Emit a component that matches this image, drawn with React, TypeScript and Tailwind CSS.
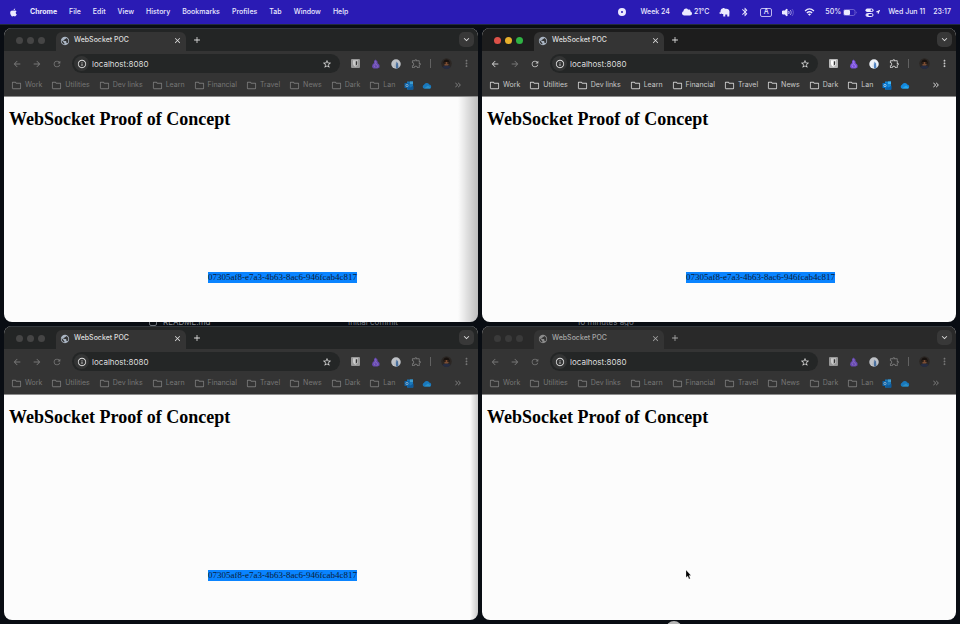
import React from "react";
import { FaApple, FaCloud, FaLocationArrow } from "react-icons/fa";
import {
  MdAdd,
  MdArrowBack,
  MdArrowForward,
  MdBluetooth,
  MdClose,
  MdInfoOutline,
  MdKeyboardArrowDown,
  MdKeyboardDoubleArrowRight,
  MdMoreVert,
  MdOutlineExtension,
  MdOutlineFolder,
  MdPublic,
  MdRefresh,
  MdStarBorder,
} from "react-icons/md";

const MENUS = ["File", "Edit", "View", "History", "Bookmarks", "Profiles", "Tab", "Window", "Help"];
const BOOKMARKS = ["Work", "Utilities", "Dev links", "Learn", "Financial", "Travel", "News", "Dark", "Lan"];
const MESSAGE = "07305af8-e7a3-4b63-8ac6-946fcab4c817";

function Elephant() {
  return (
    <svg viewBox="0 0 22 18" className="h-[9px] w-[11px]" fill="currentColor" aria-hidden="true">
      <path d="M7 1c2-1.500 4-1 5 .5 5-1 9 1 9 6 0 3-.5 6-.5 9.500h-4v-4h-4v4h-4v-5c-1.500.5-2.500 0-3-1-2 1.500-5 1-5-2 2 .8 2.500-.5 2.500-2C3 4 4.500 1.500 7 1z" />
    </svg>
  );
}

function Speaker() {
  return (
    <svg viewBox="0 0 24 18" className="h-[9px] w-3" fill="none" stroke="currentColor" strokeWidth="2" aria-hidden="true">
      <path d="M1 6h4l5-4v14l-5-4H1z" fill="currentColor" />
      <path d="M13 6c1.500 2 1.500 4 0 6" />
      <path d="M16.500 4c2.500 3 2.500 7 0 10" opacity=".6" />
      <path d="M20 2c3.500 4 3.500 10 0 14" opacity=".3" />
    </svg>
  );
}

function Wifi() {
  return (
    <svg viewBox="0 0 24 18" className="h-2 w-[11px]" fill="none" stroke="currentColor" strokeWidth="3" aria-hidden="true">
      <path d="M2 6.500c6-5.500 14-5.500 20 0" />
      <path d="M6 11c4-3.500 8-3.500 12 0" />
      <path d="M12 17.500l-3.500-3.500c2-1.800 5-1.800 7 0z" fill="currentColor" stroke="none" />
    </svg>
  );
}

function Battery() {
  return (
    <svg viewBox="0 0 28 14" className="h-[7px] w-[14px]" fill="none" aria-hidden="true">
      <rect x="1" y="1" width="23" height="12" rx="3.500" stroke="#8377d8" strokeWidth="1.500" />
      <rect x="2" y="2" width="12" height="10" rx="2" fill="#eceaff" />
      <path d="M26 5v4c1.500-.5 1.500-3.500 0-4z" fill="#8377d8" />
    </svg>
  );
}

function ControlCenter() {
  return (
    <svg viewBox="0 0 18 18" className="size-[9px]" fill="none" stroke="currentColor" strokeWidth="2" aria-hidden="true">
      <rect x="1" y="1" width="16" height="7" rx="3.500" fill="currentColor" stroke="none" />
      <circle cx="13" cy="4.500" r="1.800" fill="#2a1bb4" stroke="none" />
      <rect x="2" y="11" width="14" height="6" rx="3" />
      <circle cx="5" cy="14" r="2.500" fill="currentColor" stroke="none" />
    </svg>
  );
}

function Shield() {
  return (
    <svg viewBox="0 0 18 18" className="size-[9px]" aria-hidden="true">
      <rect width="18" height="18" rx="2" fill="#b9b9b9" />
      <path d="M4 2.500h10V9c0 3-2 5-5 6.500C6 14 4 12 4 9z" fill="#fff" />
      <path d="M9.500 4.500h3V9c0 2-1 3.200-3 4.500z" fill="#343434" />
    </svg>
  );
}

function PurpleExtension() {
  return (
    <svg viewBox="0 0 18 20" className="h-[10px] w-[9px]" aria-hidden="true">
      <path d="M9 1l4 4v3l4 4v5l-4 2H5l-3-3 1-5 3-3V4z" fill="#7a50dc" />
      <path d="M9 4l1 4-4 5 2 4m2-7l4 5-3 2" fill="none" stroke="#b79bf5" strokeWidth="1.200" />
    </svg>
  );
}

function SailExtension() {
  return (
    <svg viewBox="0 0 20 20" className="size-[10px]" aria-hidden="true">
      <circle cx="10" cy="10" r="9.500" fill="#eef2f8" />
      <path d="M11 5l3 4 1 9-5 1V12z" fill="#4f83c2" />
      <path d="M9 5v12l-2-1z" fill="#bccbe0" />
    </svg>
  );
}

function Avatar() {
  return (
    <svg viewBox="0 0 22 22" className="size-[11px]" aria-hidden="true">
      <circle cx="11" cy="11" r="10.500" fill="#2b2623" />
      <path d="M5 9c0-8 12-8 12 0l-1 3H6z" fill="#17110e" />
      <path d="M7 8h8v6l-4 4-4-3z" fill="#7b4d32" />
      <path d="M6 9h4v2H6zm6 0h5v2h-5z" fill="#120e0c" />
      <path d="M3 18c3-4 13-4 16 0-4 5-12 5-16 0z" fill="#252c42" />
    </svg>
  );
}

function Outlook() {
  return (
    <svg viewBox="0 0 20 18" className="h-[9px] w-[10px]" aria-hidden="true">
      <path d="M6 1h12v16H6z" fill="#1388dc" />
      <path d="M12 1h6v5h-6z" fill="#43b6f5" />
      <path d="M7 9l6 4 6-4v8H7z" fill="#0765b5" />
      <rect x="1" y="4" width="10" height="10" rx="1" fill="#0671c7" />
      <circle cx="6" cy="9" r="2.300" fill="none" stroke="#d5ebfb" strokeWidth="1.300" />
    </svg>
  );
}

function OneDrive() {
  return (
    <svg viewBox="0 0 20 14" className="h-[7px] w-[10px]" aria-hidden="true">
      <path d="M4 13a4 4 0 010-7.500A6 6 0 0114.500 5 4.200 4.200 0 0116 13z" fill="#1389df" />
      <path d="M4 13l8-6 6 5-2 1z" fill="#28a8ee" />
    </svg>
  );
}

function MenuBar() {
  return (
    <header className="flex h-6 shrink-0 items-center justify-between bg-[#2a1bb4] px-[9px] text-[7px] font-medium whitespace-nowrap text-[#eceaff]">
      <nav className="flex items-center gap-3" aria-label="Menu bar">
        <button aria-label="Apple menu">
          <FaApple className="size-[9px]" />
        </button>
        <button className="font-bold">Chrome</button>
        {MENUS.map((menu) => (
          <button key={menu}>{menu}</button>
        ))}
      </nav>
      <div className="flex items-center gap-[10px]">
        <span className="mr-1 size-2 rounded-full border-[3px] border-[#eceaff]" />
        <span className="mr-[2px]">Week 24</span>
        <span className="flex items-center gap-[2px]">
          <FaCloud className="size-[10px]" />
          21°C
        </span>
        <Elephant />
        <MdBluetooth className="size-[10px]" />
        <span className="flex h-[9px] w-3 items-center justify-center rounded-[2px] border border-[#bdb6ee]">A</span>
        <Speaker />
        <Wifi />
        <span className="flex items-center gap-[2px]">
          50%
          <Battery />
        </span>
        <span className="-ml-[2px] flex items-center gap-[2px]">
          <ControlCenter />
          <FaLocationArrow className="size-1" />
        </span>
        <time className="-ml-[2px] flex gap-2">
          <span>Wed Jun 11</span>
          <span>23:17</span>
        </time>
      </div>
    </header>
  );
}

type Variant = "active" | "inactive" | "dimmed";

function TrafficLights({ variant }: { variant: Variant }) {
  const tones =
    variant === "active"
      ? ["bg-[#dd5148]", "bg-[#e8b02c]", "bg-[#2fb344]"]
      : variant === "inactive"
        ? ["bg-[#454545]", "bg-[#454545]", "bg-[#454545]"]
        : ["bg-[#3a3a3a]", "bg-[#3a3a3a]", "bg-[#3a3a3a]"];
  const names = ["Close window", "Minimize window", "Zoom window"];
  return (
    <div className="flex w-[52px] items-center gap-1 pl-3">
      {tones.map((tone, i) => (
        <button key={names[i]} aria-label={names[i]} className={`size-[7px] rounded-full ${tone}`} />
      ))}
    </div>
  );
}

function BrowserWindow({ id, variant, message, shade }: { id: string; variant: Variant; message?: string; shade?: string }) {
  const active = variant === "active";
  const strip = active ? "bg-[#1d1d1d]" : variant === "inactive" ? "bg-[#232525]" : "bg-[#292929]";
  const muted = active ? "text-[#c9c9c9]" : "text-[#767676]";
  const title = variant === "dimmed" ? "text-[#a6a6a6]" : "text-[#dedede]";
  return (
    <section className="relative flex min-h-0 min-w-0 flex-col overflow-hidden rounded-lg bg-[#fcfcfc]" aria-label="WebSocket POC">
      <div className={`flex h-[23px] shrink-0 items-end border-t border-[#33383d] pr-1 ${strip}`}>
        <div className="flex h-[22px] items-center">
          <TrafficLights variant={variant} />
        </div>
        <div className={`flex h-[19px] w-[130px] items-center rounded-t-md bg-[#343434] pr-1 pb-[2px] pl-1 text-[7px] font-medium ${title}`}>
          <MdPublic className={`mr-1 size-[10px] ${variant === "dimmed" ? "text-[#8b8b8b]" : "text-[#a9b4c2]"}`} />
          <span className="flex-1">WebSocket POC</span>
          <button aria-label="Close tab">
            <MdClose className="size-[9px]" />
          </button>
        </div>
        <button aria-label="New tab" className={`mb-[6px] ml-[6px] ${title}`}>
          <MdAdd className="size-[10px]" />
        </button>
        <button aria-label="Search tabs" className="mb-1 ml-auto flex size-[15px] items-center justify-center rounded-[5px] bg-[#383838] text-[#dedede]">
          <MdKeyboardArrowDown className="size-[11px]" />
        </button>
      </div>

      <div className={`flex h-[25px] shrink-0 items-center bg-[#343434] pr-[6px] pl-2 ${muted}`}>
        <div className="flex w-[60px] items-center gap-[10px]">
          <button aria-label="Back">
            <MdArrowBack className="size-[10px]" />
          </button>
          <button aria-label="Forward" className="text-[#767676]">
            <MdArrowForward className="size-[10px]" />
          </button>
          <button aria-label="Reload">
            <MdRefresh className="size-[10px]" />
          </button>
        </div>
        <div className="flex h-[19px] min-w-0 flex-1 items-center rounded-full bg-[#242626] pr-2 pl-[2px] text-[#dedede]">
          <label htmlFor={id} aria-label="Address" className="flex size-[15px] items-center justify-center rounded-full bg-[#333434]">
            <MdInfoOutline className="size-[10px]" />
          </label>
          <input
            id={id}
            aria-label="Address"
            defaultValue="localhost:8080"
            className="ml-[3px] h-3 min-w-0 flex-1 bg-transparent text-[8px] leading-3 outline-none"
          />
          <button aria-label="Bookmark this page">
            <MdStarBorder className="size-[10px]" />
          </button>
        </div>
        <div className={`ml-[11px] flex items-center gap-[11px] ${active ? "" : "opacity-75"}`}>
          <Shield />
          <PurpleExtension />
          <SailExtension />
        </div>
        <button aria-label="Extensions" className="ml-[10px]">
          <MdOutlineExtension className="size-[11px]" />
        </button>
        <span className="ml-2 h-[9px] w-px bg-[#626262]" />
        <button aria-label="Profile" className="ml-[10px]">
          <Avatar />
        </button>
        <button aria-label="Menu" className="ml-[9px]">
          <MdMoreVert className="size-[11px]" />
        </button>
      </div>

      <div className={`flex h-[21px] shrink-0 items-center border-b border-[#8c8c8c] bg-[#343434] pr-[15px] pb-[2px] pl-[7px] text-[7px] whitespace-nowrap ${muted}`}>
        <nav className="flex items-center gap-[9px]" aria-label="Bookmarks">
          {BOOKMARKS.map((name) => (
            <a key={name} href="#" className="flex items-center gap-[3px]">
              <MdOutlineFolder className="size-[11px]" />
              {name}
            </a>
          ))}
          <span className={`flex items-center gap-2 ${active ? "" : "opacity-80"}`}>
            <a href="#" aria-label="Outlook">
              <Outlook />
            </a>
            <a href="#" aria-label="OneDrive">
              <OneDrive />
            </a>
          </span>
        </nav>
        <button aria-label="More bookmarks" className="ml-auto">
          <MdKeyboardDoubleArrowRight className="size-[10px]" />
        </button>
      </div>

      <div className="min-h-0 flex-1 px-[5px] pt-3 font-['Liberation_Serif',serif] text-black">
        <h1 className="text-[18px] leading-5 font-bold">WebSocket Proof of Concept</h1>
        {message && (
          <p className="mt-[143px] ml-[199px] w-fit bg-[#0a84ff] text-[9px] leading-[11px] text-[#0b2038]">{message}</p>
        )}
      </div>
      {shade && <div className={`pointer-events-none absolute top-[69px] right-0 bottom-0 bg-linear-to-l to-transparent ${shade}`} />}
    </section>
  );
}

export default function App() {
  return (
    <div className="flex h-screen flex-col overflow-hidden bg-[#090d13] font-[Inter,sans-serif]">
      <MenuBar />
      <main className="relative grid min-h-0 flex-1 grid-cols-2 grid-rows-2 gap-1 border-t border-[#202a3c] px-1 pt-[3px] pb-1">
        <div className="absolute top-[292px] left-[149px] flex items-center gap-[6px] text-[8px] leading-[10px] whitespace-nowrap text-[#8a9097]" aria-hidden="true">
          <span className="size-2 rounded-[2px] border border-[#6b7178]" />
          README.md
        </div>
        <span className="absolute top-[292px] left-[348px] text-[8px] leading-[10px] whitespace-nowrap text-[#747a82]">Initial commit</span>
        <span className="absolute top-[292px] left-[577px] text-[8px] leading-[10px] whitespace-nowrap text-[#747a82]">10 minutes ago</span>
        <span className="absolute top-[596px] left-[666px] size-4 rounded-full bg-[#b5b5b5]" />
        <BrowserWindow id="address-1" variant="inactive" message={MESSAGE} shade="w-5 from-black/25" />
        <BrowserWindow id="address-2" variant="active" message={MESSAGE} />
        <BrowserWindow id="address-3" variant="inactive" message={MESSAGE} shade="w-2 from-black/20" />
        <BrowserWindow id="address-4" variant="dimmed" />
        <svg viewBox="0 0 10 18" className="absolute top-[545px] left-[686px] h-[9px] w-[5px]" aria-hidden="true">
          <path d="M0 0v15l3.500-3 2.500 6 2.500-1-2.500-6h4z" fill="#000" stroke="#fff" strokeWidth=".5" />
        </svg>
      </main>
    </div>
  );
}
